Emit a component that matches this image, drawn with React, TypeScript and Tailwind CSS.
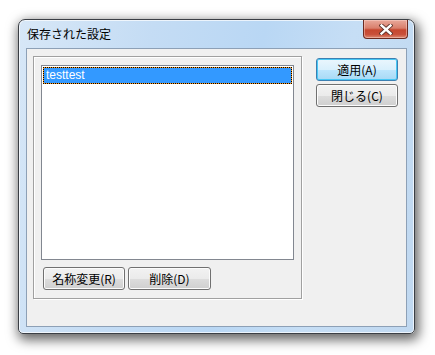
import React from "react";

const jp = { fontFamily: '"Noto Sans CJK JP", "Noto Sans", sans-serif' };

function Btn({ label, w, def }: { label: string; w: string; def?: boolean }) {
  return (
    <div
      className={
        "h-[23px] flex items-center justify-center rounded-[3px] border text-[12px] leading-none text-black " +
        w +
        " " +
        (def
          ? "border-[#3c7fb1] bg-[linear-gradient(to_bottom,#eaf6fd_0%,#d9f0fc_50%,#bee6fd_51%,#a7d9f5_100%)] shadow-[inset_0_0_0_1px_#48c8f5]"
          : "border-[#707070] bg-[linear-gradient(to_bottom,#f2f2f2_0%,#ebebeb_50%,#dddddd_51%,#cfcfcf_100%)] shadow-[inset_0_0_0_1px_#fcfcfc]")
      }
      style={jp}
    >
      {label}
    </div>
  );
}

export default function App() {
  return (
    <div className="w-[435px] h-[355px] bg-white pt-[19px] pl-[18px] overflow-hidden">
      <div className="w-[397px] h-[315px] rounded-t-[7px] rounded-b-[5px] border border-[#3b3f45] bg-[linear-gradient(100deg,#d7e7f7_0%,#c4dcf4_30%,#b9d7f4_55%,#c6def5_75%,#c0d8f0_100%)] shadow-[2px_4px_12px_2px_rgba(0,0,0,0.6),inset_0_0_0_1px_rgba(255,255,255,0.7)] flex flex-col">
        <div className="h-[28px] flex items-start justify-between">
          <div className="pl-[8px] pt-[6px] text-[12px] leading-[16px] text-black" style={jp}>
            保存された設定
          </div>
          <div className="mr-[6px] w-[45px] h-[19px] rounded-b-[4px] border border-t-0 border-[#6b2a20] bg-[linear-gradient(to_bottom,#e9a99b_0%,#d97f6c_45%,#c6472f_55%,#c9503a_80%,#dc8a73_100%)] shadow-[inset_0_0_0_1px_rgba(255,220,210,0.45)] flex items-center justify-center">
            <svg width="14" height="11" viewBox="0 0 14 11">
              <path d="M2.5 1.5 L11.5 9.5 M11.5 1.5 L2.5 9.5" stroke="#5a3028" strokeWidth="4.2" strokeLinecap="square" />
              <path d="M2.5 1.5 L11.5 9.5 M11.5 1.5 L2.5 9.5" stroke="#ffffff" strokeWidth="2.4" strokeLinecap="square" />
            </svg>
          </div>
        </div>
        <div className="ml-[7px] w-[381px] h-[279px] border border-[#8da0b6] bg-[#f0f0f0] flex pl-[6px] pt-[7px]">
          <div className="w-[269px] h-[243px] border border-[#a0a0a0] shadow-[inset_1px_1px_0_#ffffff,1px_1px_0_#ffffff] pl-[7px] pt-[8px] flex flex-col">
            <div className="w-[253px] h-[195px] border border-[#828790] bg-white p-[1px]">
              <div className="h-[17px] w-[249px] p-[1px] bg-[repeating-conic-gradient(#ff9a1a_0_25%,#000000_0_50%)] bg-[length:2px_2px]">
                <div
                  className="h-full bg-[#3399ff] text-white text-[12px] leading-[15px] pl-[2px]"
                  style={{ fontFamily: '"Liberation Sans", Arial, sans-serif' }}
                >
                  testtest
                </div>
              </div>
            </div>
            <div className="mt-[7px] pl-[2px] flex gap-[3px]">
              <Btn label="名称変更(R)" w="w-[82px]" />
              <Btn label="削除(D)" w="w-[83px]" />
            </div>
          </div>
          <div className="ml-[14px] mt-[2px] flex flex-col gap-[3px]">
            <Btn label="適用(A)" w="w-[82px]" def />
            <Btn label="閉じる(C)" w="w-[82px]" />
          </div>
        </div>
      </div>
    </div>
  );
}
